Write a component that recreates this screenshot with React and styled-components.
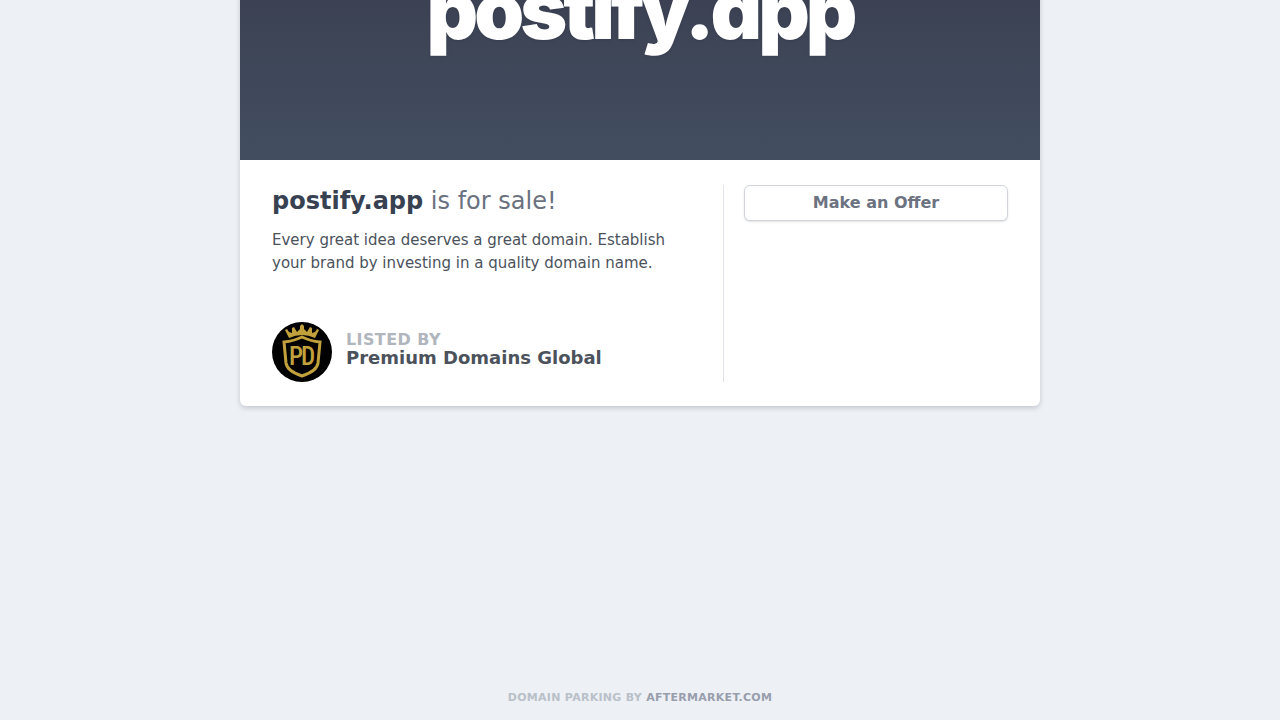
import React from "react"
import styled, { createGlobalStyle } from "styled-components"

const GlobalStyle = createGlobalStyle`
  *,
  *::before,
  *::after {
    box-sizing: border-box;
  }
  body {
    margin: 0;
    background: #edf0f5;
    color: #4b525c;
    font-family: "DejaVu Sans", sans-serif;
  }
  h1,
  h2,
  p {
    margin: 0;
  }
  a {
    color: inherit;
    text-decoration: none;
  }
`

const Page = styled.div`
  min-height: 100vh;
  display: flex;
  flex-direction: column;
  align-items: center;
  overflow: hidden;
`

/* The hero bleeds over the top edge of the page */
const Card = styled.main`
  width: 100%;
  max-width: 800px;
  margin-top: -140px;
  border-radius: 6px;
  overflow: hidden;
  background: #fff;
  box-shadow: 0 2px 5px rgba(45, 55, 72, 0.22);
`

const Hero = styled.header`
  min-height: 300px;
  display: flex;
  align-items: center;
  justify-content: center;
  background: linear-gradient(#363748, #424e60);
`

const HeroTitle = styled.h1`
  color: #fff;
  font-family: Inter, sans-serif;
  font-size: 80px;
  line-height: 96px;
  font-weight: 900;
  font-feature-settings: "cv11";
  letter-spacing: -4px;
  text-shadow: 0 1px 3px rgba(0, 0, 0, 0.1);
`

const Body = styled.div`
  display: grid;
  grid-template-columns: 1fr 285px;
  padding: 25px 32px 24px;
  @media (max-width: 700px) {
    grid-template-columns: 1fr;
    gap: 24px;
  }
`

const Info = styled.section`
  padding-right: 32px;
`

const SaleTitle = styled.h2`
  color: #6b7280;
  font-size: 24px;
  line-height: 32px;
  font-weight: 400;
  strong {
    color: #374151;
  }
`

const Pitch = styled.p`
  margin-top: 12px;
  font-size: 15px;
  line-height: 23px;
`

const Seller = styled.div`
  display: flex;
  align-items: center;
  gap: 14px;
  margin-top: 47px;
`

const SellerText = styled.div`
  padding-bottom: 6px;
`

const Logo = styled.svg`
  width: 60px;
  height: 60px;
  flex: none;
`

const SellerLabel = styled.p`
  color: #b1b5bc;
  font-size: 16px;
  line-height: 18px;
  font-weight: 700;
  letter-spacing: 0.025em;
  text-transform: uppercase;
`

const SellerName = styled.p`
  font-size: 18px;
  line-height: 18px;
  font-weight: 700;
`

const Actions = styled.aside`
  border-left: 1px solid #e1e4e8;
  padding-left: 20px;
`

const OfferButton = styled.button`
  width: 100%;
  padding: 5px 16px;
  border: 1px solid #d1d5db;
  border-radius: 6px;
  background: #fff;
  color: #6b7280;
  font-family: inherit;
  font-size: 16px;
  line-height: 24px;
  font-weight: 700;
  cursor: pointer;
  box-shadow: 0 1px 2px rgba(0, 0, 0, 0.12);
`

const Footer = styled.footer`
  margin-top: auto;
  padding: 0 16px 13px;
  color: #b9c0c8;
  font-size: 11px;
  line-height: 18px;
  font-weight: 700;
  letter-spacing: 0.025em;
  text-transform: uppercase;
  a {
    color: #989eab;
  }
`

const SellerLogo = () => (
  <Logo viewBox="0 0 60 60" role="img" aria-label="Premium Domains Global">
    <circle cx="30" cy="30" r="30" fill="#000" />
    <g fill="#c2a13d">
      <path d="M17 16 L13 8 L15 7 L17 10 L20 11 L20 6 L22 5 L25 10 L28 7 L28 4 L30 2 L32 4 L32 7 L35 10 L38 5 L40 6 L40 11 L43 10 L45 7 L47 8 L43 16 Q30 10 17 16Z" />
      <g
        fontFamily="'Roboto Condensed', Roboto, sans-serif"
        fontSize="25"
        fontWeight="500"
        textAnchor="middle"
      >
        <text x="24" y="43">
          P
        </text>
        <text x="36" y="43">
          D
        </text>
      </g>
    </g>
    <path
      d="M12 20 Q22 19 30 15 Q38 19 48 20 L46 41 Q45 49 30 54 Q15 49 14 41Z"
      fill="none"
      stroke="#c2a13d"
      strokeWidth="3"
    />
  </Logo>
)

const App = () => (
  <>
    <GlobalStyle />
    <Page>
      <Card>
        <Hero>
          <HeroTitle>postify.app</HeroTitle>
        </Hero>
        <Body>
          <Info>
            <SaleTitle>
              <strong>postify.app</strong> is for sale!
            </SaleTitle>
            <Pitch>
              Every great idea deserves a great domain. Establish your brand by
              investing in a quality domain name.
            </Pitch>
            <Seller>
              <SellerLogo />
              <SellerText>
                <SellerLabel>Listed by</SellerLabel>
                <SellerName>Premium Domains Global</SellerName>
              </SellerText>
            </Seller>
          </Info>
          <Actions>
            <OfferButton type="button">Make an Offer</OfferButton>
          </Actions>
        </Body>
      </Card>
      <Footer>
        Domain parking by <a href="#aftermarket">Aftermarket.com</a>
      </Footer>
    </Page>
  </>
)

export default App
